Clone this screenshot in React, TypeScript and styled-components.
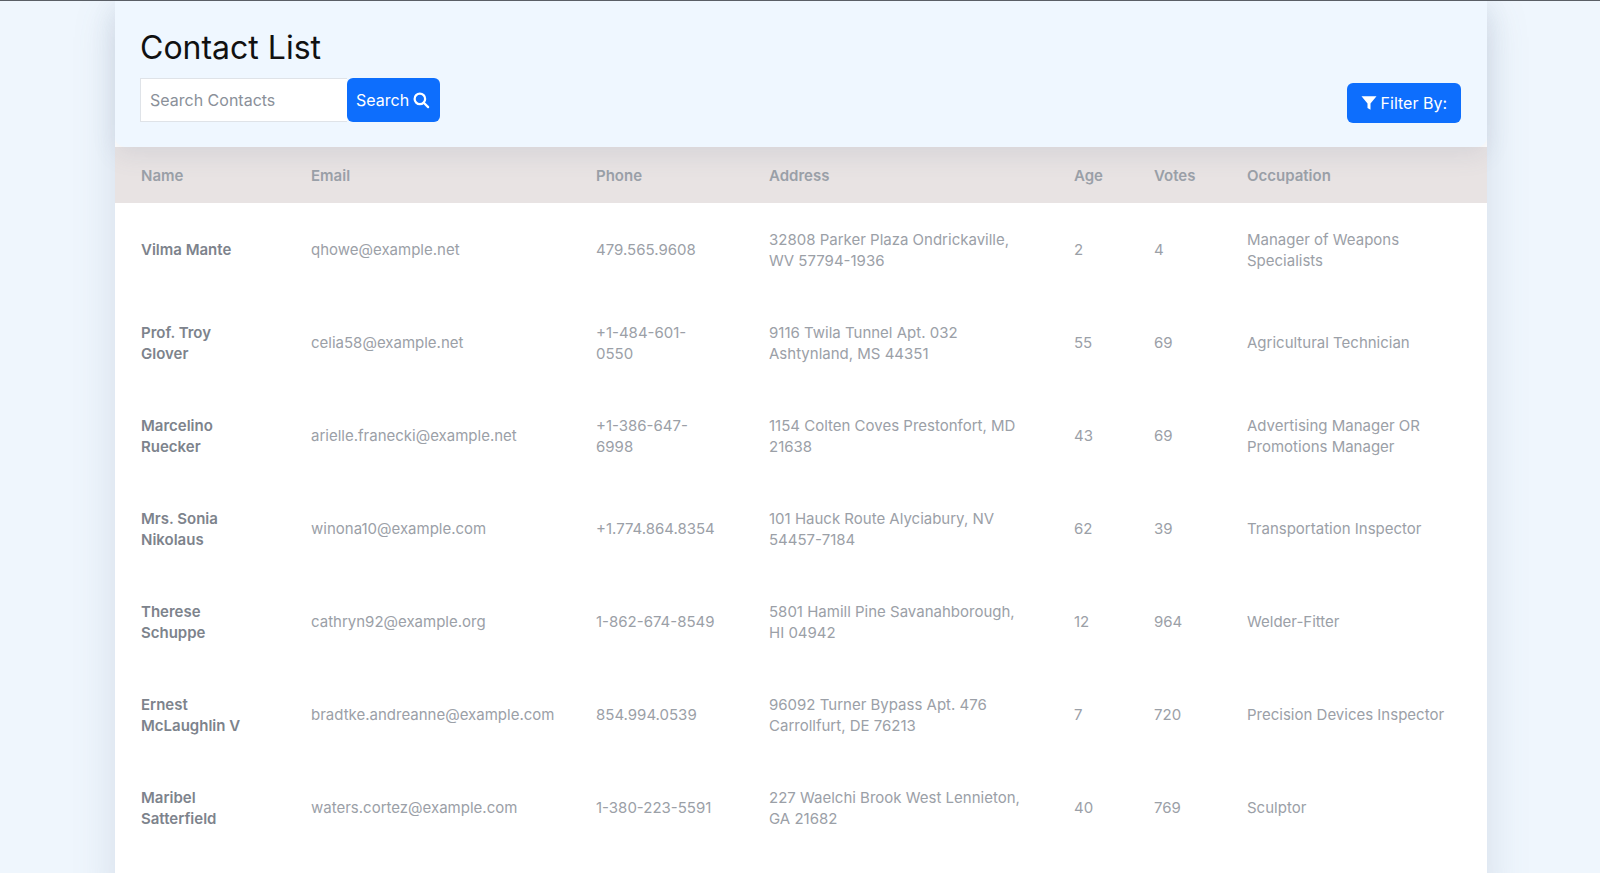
import React from "react";
import styled, { createGlobalStyle } from "styled-components";

const Global = createGlobalStyle`
  html, body { margin: 0; padding: 0; background: #eff6fd; font-family: Inter, "Noto Sans", sans-serif; }
  body { border-top: 1px solid #5a5f66; height: 872px; overflow: hidden; }
`;

const Wrap = styled.div`
  width: 1372px;
  margin: 0 auto 0 115px;
  min-height: 900px;
  background: #fff;
  box-shadow: 0 10px 40px rgba(90, 110, 140, 0.18);
`;

const Header = styled.div`
  background: #eff7ff;
  border-radius: 0 0 10px 10px;
  box-shadow: 0 8px 24px rgba(90, 110, 140, 0.12);
  padding: 28px 26px 25px 25px;
  display: flex;
  justify-content: space-between;
  align-items: flex-end;
  height: 93px;
  position: relative;
`;

const Title = styled.h1`
  margin: 0 0 10px;
  font-size: 32px;
  font-weight: 400;
  color: #111;
  line-height: 40px;
`;

const SearchRow = styled.div`
  display: flex;
`;

const Input = styled.input`
  width: 207px;
  height: 44px;
  box-sizing: border-box;
  border: 1px solid #dfe3e8;
  border-right: none;
  padding: 0 9px;
  font: 16px Inter, sans-serif;
  color: #333;
  &::placeholder { color: #8a9099; }
`;

const Btn = styled.button<{ $h: number }>`
  background: #0d6efd;
  color: #fff;
  border: none;
  border-radius: 6px;
  font: 16px Inter, sans-serif;
  height: ${(p) => p.$h}px;
  padding: 0 10px 0 9px;
  display: flex;
  align-items: center;
  gap: 3px;
`;

const FilterBtn = styled(Btn)`
  padding: 0 14px 0 13px;
  margin-bottom: -1px;
`;

const Table = styled.table`
  width: 100%;
  border-collapse: collapse;
  table-layout: fixed;
  background: #fff;
`;

const Th = styled.th`
  background: #e8e3e3;
  height: 56px;
  text-align: left;
  padding: 0 26px;
  font-size: 15px;
  font-weight: 600;
  color: #9aa0a8;
`;

const Td = styled.td<{ $bold?: boolean }>`
  height: 93px;
  padding: 0 26px;
  font-size: 15px;
  line-height: 21px;
  color: ${(p) => (p.$bold ? "#7d838c" : "#9ba0a7")};
  font-weight: ${(p) => (p.$bold ? 600 : 400)};
  vertical-align: middle;
`;

const rows = [
  ["Vilma Mante", "qhowe@example.net", "479.565.9608", "32808 Parker Plaza Ondrickaville, WV 57794-1936", "2", "4", "Manager of Weapons Specialists"],
  ["Prof. Troy Glover", "celia58@example.net", "+1-484-601-0550", "9116 Twila Tunnel Apt. 032 Ashtynland, MS 44351", "55", "69", "Agricultural Technician"],
  ["Marcelino Ruecker", "arielle.franecki@example.net", "+1-386-647-6998", "1154 Colten Coves Prestonfort, MD 21638", "43", "69", "Advertising Manager OR Promotions Manager"],
  ["Mrs. Sonia Nikolaus", "winona10@example.com", "+1.774.864.8354", "101 Hauck Route Alyciabury, NV 54457-7184", "62", "39", "Transportation Inspector"],
  ["Therese Schuppe", "cathryn92@example.org", "1-862-674-8549", "5801 Hamill Pine Savanahborough, HI 04942", "12", "964", "Welder-Fitter"],
  ["Ernest McLaughlin V", "bradtke.andreanne@example.com", "854.994.0539", "96092 Turner Bypass Apt. 476 Carrollfurt, DE 76213", "7", "720", "Precision Devices Inspector"],
  ["Maribel Satterfield", "waters.cortez@example.com", "1-380-223-5591", "227 Waelchi Brook West Lennieton, GA 21682", "40", "769", "Sculptor"],
];

const widths = [170, 285, 173, 305, 80, 93, undefined];
const heads = ["Name", "Email", "Phone", "Address", "Age", "Votes", "Occupation"];

export default function App() {
  return (
    <>
      <Global />
      <Wrap>
        <Header>
          <div>
            <Title>Contact List</Title>
            <SearchRow>
              <Input placeholder="Search Contacts" />
              <Btn $h={44}>
                Search
                <svg width="18" height="18" viewBox="0 0 24 24" fill="none" stroke="#fff" strokeWidth="3" strokeLinecap="round">
                  <circle cx="10.5" cy="10.5" r="7" />
                  <path d="M16 16l5.5 5.5" />
                </svg>
              </Btn>
            </SearchRow>
          </div>
          <FilterBtn $h={40}>
            <svg width="18" height="18" viewBox="0 0 24 24" fill="#fff">
              <path d="M2 3h20l-8 9.5V21l-4-2.5v-6z" />
            </svg>
            Filter By:
          </FilterBtn>
        </Header>
        <Table>
          <colgroup>
            {widths.map((w, i) => (
              <col key={i} style={w ? { width: w } : undefined} />
            ))}
          </colgroup>
          <thead>
            <tr>{heads.map((h) => <Th key={h}>{h}</Th>)}</tr>
          </thead>
          <tbody>
            {rows.map((r) => (
              <tr key={r[0]}>
                {r.map((c, i) => (
                  <Td key={i} $bold={i === 0}>{c}</Td>
                ))}
              </tr>
            ))}
          </tbody>
        </Table>
      </Wrap>
    </>
  );
}
